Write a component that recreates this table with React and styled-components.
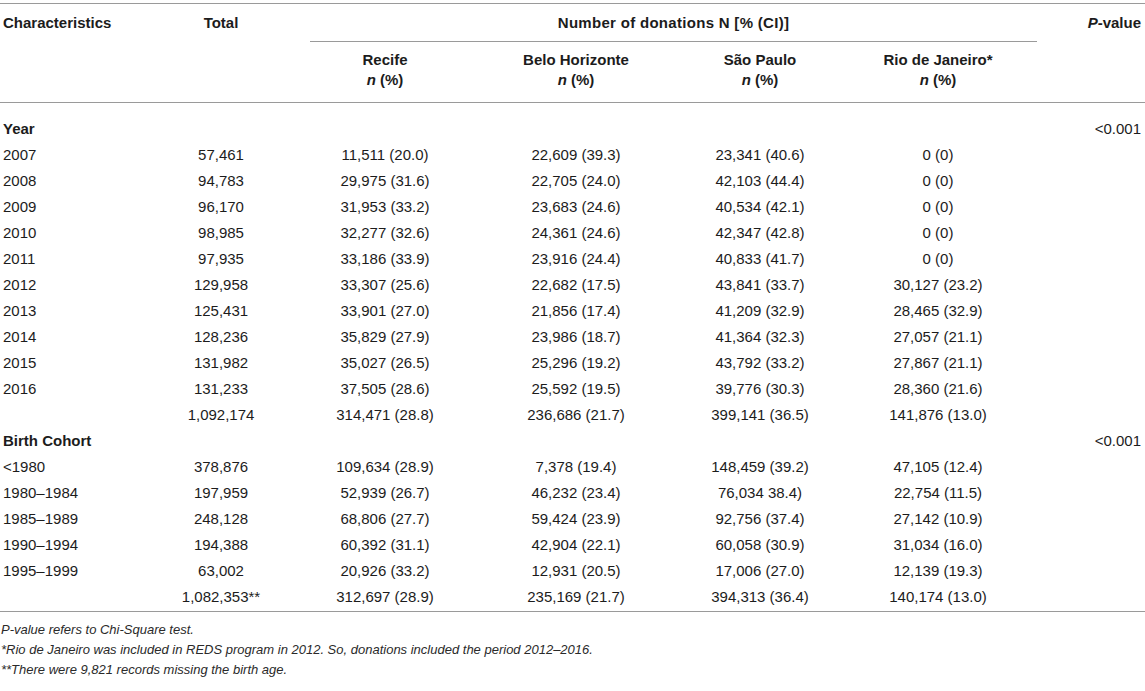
import React from 'react';
import styled, { createGlobalStyle } from 'styled-components';

const GlobalStyle = createGlobalStyle`
  body {
    margin: 0;
    background: #ffffff;
    font-family: "Liberation Sans", Arial, sans-serif;
    color: #1c1c1c;
  }
`;

const COLS = '160px 122px 206px 176px 192px 164px 1fr';

const Page = styled.div`
  width: 1145px;
  height: 691px;
  padding-top: 3px;
  box-sizing: border-box;
`;

const Rule = styled.div`
  height: 1px;
  background: #9a9a9a;
`;

const Head = styled.div`
  display: grid;
  grid-template-columns: ${COLS};
  font-size: 15px;
  font-weight: bold;
`;

const HeadCell = styled.div`
  grid-column: ${(p) => p.$col || 'auto'};
  grid-row: ${(p) => p.$row || 'auto'};
  text-align: ${(p) => p.$align || 'center'};
  padding: ${(p) => p.$pad || '0'};
  line-height: 20px;
`;

const GroupTitle = styled(HeadCell)`
  margin: 0 -17px 0 28px;
  letter-spacing: 0.3px;
`;

const SpanRule = styled.div`
  grid-column: 3 / 7;
  grid-row: 2;
  height: 1px;
  background: #9a9a9a;
  margin: 0 -17px 0 28px;
`;

const Body = styled.div`
  padding: 12px 0 2px;
`;

const Row = styled.div`
  display: grid;
  grid-template-columns: ${COLS};
  height: 26px;
  align-items: center;
  font-size: 15px;
  font-weight: ${(p) => (p.$section ? 'bold' : 'normal')};
`;

const Cell = styled.div`
  text-align: center;
  white-space: nowrap;

  &:first-child {
    text-align: left;
    padding-left: 3px;
  }

  &:last-child {
    text-align: right;
    padding-right: 4px;
    font-weight: normal;
  }
`;

const Notes = styled.div`
  padding: 8px 0 0 1px;
  font-size: 13px;
  font-style: italic;
  line-height: 20px;
  color: #2a2a2a;
`;

const yearRows = [
  ['2007', '57,461', '11,511 (20.0)', '22,609 (39.3)', '23,341 (40.6)', '0 (0)'],
  ['2008', '94,783', '29,975 (31.6)', '22,705 (24.0)', '42,103 (44.4)', '0 (0)'],
  ['2009', '96,170', '31,953 (33.2)', '23,683 (24.6)', '40,534 (42.1)', '0 (0)'],
  ['2010', '98,985', '32,277 (32.6)', '24,361 (24.6)', '42,347 (42.8)', '0 (0)'],
  ['2011', '97,935', '33,186 (33.9)', '23,916 (24.4)', '40,833 (41.7)', '0 (0)'],
  ['2012', '129,958', '33,307 (25.6)', '22,682 (17.5)', '43,841 (33.7)', '30,127 (23.2)'],
  ['2013', '125,431', '33,901 (27.0)', '21,856 (17.4)', '41,209 (32.9)', '28,465 (32.9)'],
  ['2014', '128,236', '35,829 (27.9)', '23,986 (18.7)', '41,364 (32.3)', '27,057 (21.1)'],
  ['2015', '131,982', '35,027 (26.5)', '25,296 (19.2)', '43,792 (33.2)', '27,867 (21.1)'],
  ['2016', '131,233', '37,505 (28.6)', '25,592 (19.5)', '39,776 (30.3)', '28,360 (21.6)'],
  ['', '1,092,174', '314,471 (28.8)', '236,686 (21.7)', '399,141 (36.5)', '141,876 (13.0)'],
];

const cohortRows = [
  ['<1980', '378,876', '109,634 (28.9)', '7,378 (19.4)', '148,459 (39.2)', '47,105 (12.4)'],
  ['1980–1984', '197,959', '52,939 (26.7)', '46,232 (23.4)', '76,034 38.4)', '22,754 (11.5)'],
  ['1985–1989', '248,128', '68,806 (27.7)', '59,424 (23.9)', '92,756 (37.4)', '27,142 (10.9)'],
  ['1990–1994', '194,388', '60,392 (31.1)', '42,904 (22.1)', '60,058 (30.9)', '31,034 (16.0)'],
  ['1995–1999', '63,002', '20,926 (33.2)', '12,931 (20.5)', '17,006 (27.0)', '12,139 (19.3)'],
  ['', '1,082,353**', '312,697 (28.9)', '235,169 (21.7)', '394,313 (36.4)', '140,174 (13.0)'],
];

const cities = ['Recife', 'Belo Horizonte', 'São Paulo', 'Rio de Janeiro*'];

const Section = ({ title, rows }) => (
  <>
    <Row $section>
      <Cell>{title}</Cell>
      <Cell />
      <Cell />
      <Cell />
      <Cell />
      <Cell />
      <Cell>&lt;0.001</Cell>
    </Row>
    {rows.map((r, i) => (
      <Row key={i}>
        {r.map((v, j) => (
          <Cell key={j}>{v}</Cell>
        ))}
        <Cell />
      </Row>
    ))}
  </>
);

const App = () => {
  return (
    <Page>
      <GlobalStyle />
      <Rule />
      <Head>
        <HeadCell $col="1" $row="1" $align="left" $pad="9px 0 8px 3px">
          Characteristics
        </HeadCell>
        <HeadCell $col="2" $row="1" $pad="9px 0 8px">
          Total
        </HeadCell>
        <GroupTitle $col="3 / 7" $row="1" $pad="9px 0 8px">
          Number of donations N [% (CI)]
        </GroupTitle>
        <HeadCell $col="7" $row="1" $align="right" $pad="9px 4px 8px 0">
          <i>P</i>-value
        </HeadCell>
        <SpanRule />
        {cities.map((c, i) => (
          <HeadCell key={c} $col={`${i + 3}`} $row="3" $pad="8px 0 12px">
            {c}
            <br />
            <i>n</i> (%)
          </HeadCell>
        ))}
      </Head>
      <Rule />
      <Body>
        <Section title="Year" rows={yearRows} />
        <Section title="Birth Cohort" rows={cohortRows} />
      </Body>
      <Rule />
      <Notes>
        <div>P-value refers to Chi-Square test.</div>
        <div>*Rio de Janeiro was included in REDS program in 2012. So, donations included the period 2012–2016.</div>
        <div>**There were 9,821 records missing the birth age.</div>
      </Notes>
    </Page>
  );
};

export default App;
